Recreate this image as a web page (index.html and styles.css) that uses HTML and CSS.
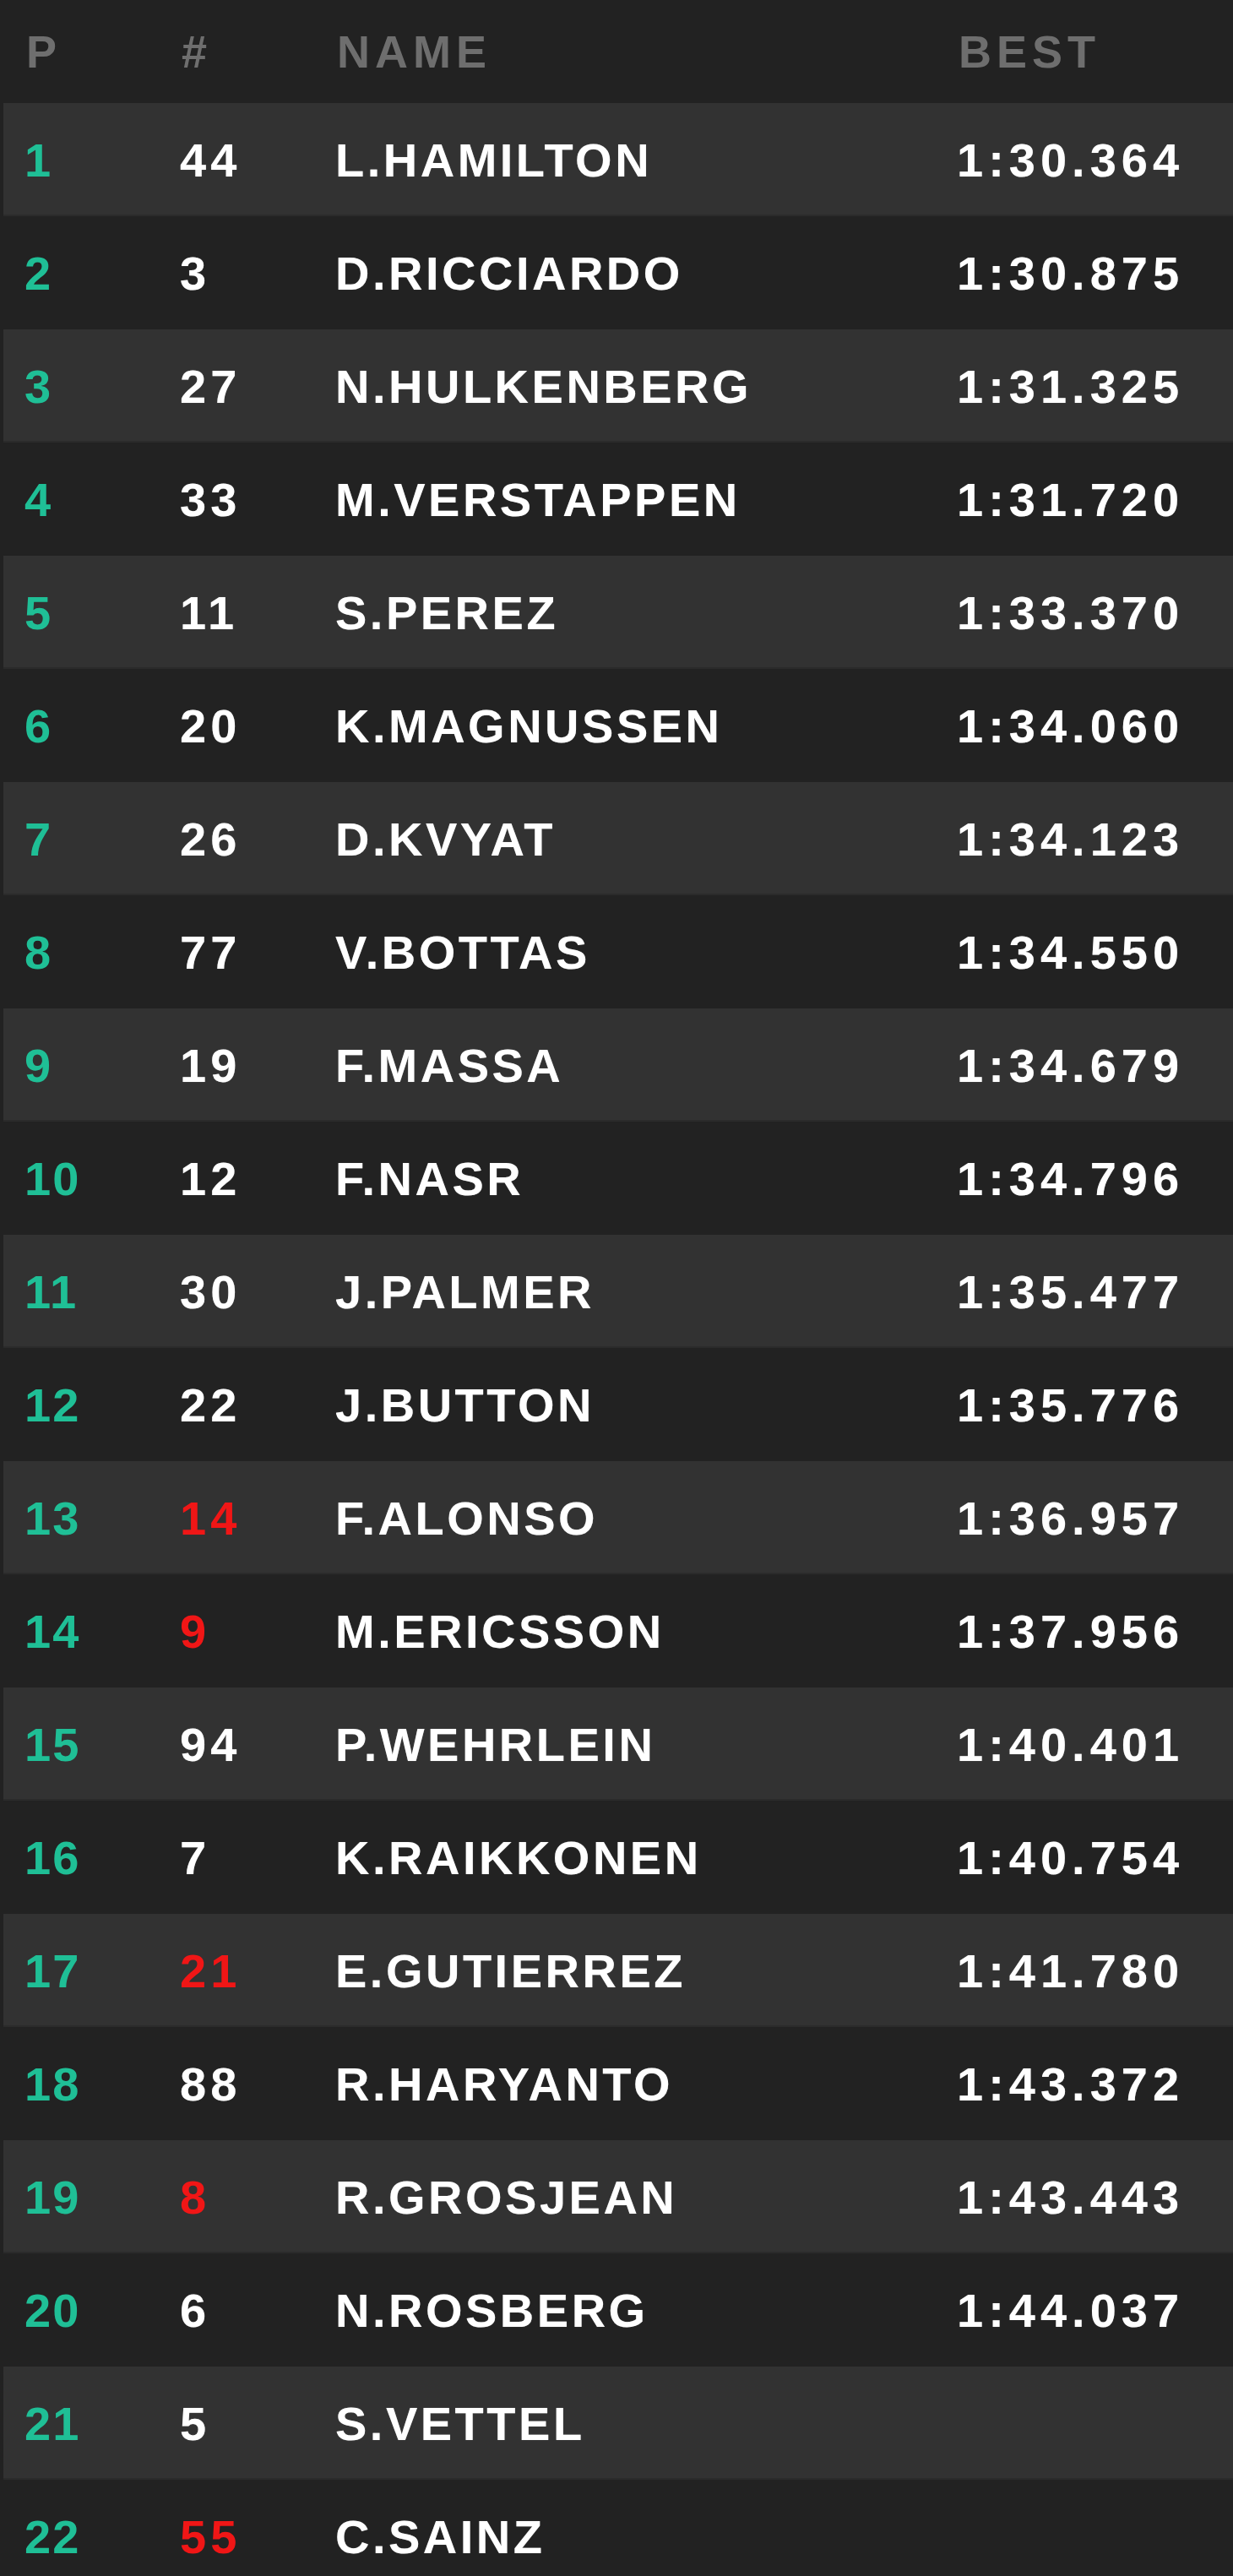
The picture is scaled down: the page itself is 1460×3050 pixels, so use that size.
FILE: index.html
```html
<!DOCTYPE html>
<html lang="en">
<head>
<meta charset="utf-8">
<title>Timing</title>
<link rel="stylesheet" href="styles.css">
</head>
<body>
<div class="board">
  <div class="head">
    <span class="c-pos">P</span>
    <span class="c-num">#</span>
    <span class="c-name">NAME</span>
    <span class="c-best">BEST</span>
  </div>
  <div class="row"><span class="c-pos">1</span><span class="c-num">44</span><span class="c-name">L.HAMILTON</span><span class="c-best">1:30.364</span></div>
  <div class="row"><span class="c-pos">2</span><span class="c-num">3</span><span class="c-name">D.RICCIARDO</span><span class="c-best">1:30.875</span></div>
  <div class="row"><span class="c-pos">3</span><span class="c-num">27</span><span class="c-name">N.HULKENBERG</span><span class="c-best">1:31.325</span></div>
  <div class="row"><span class="c-pos">4</span><span class="c-num">33</span><span class="c-name">M.VERSTAPPEN</span><span class="c-best">1:31.720</span></div>
  <div class="row"><span class="c-pos">5</span><span class="c-num">11</span><span class="c-name">S.PEREZ</span><span class="c-best">1:33.370</span></div>
  <div class="row"><span class="c-pos">6</span><span class="c-num">20</span><span class="c-name">K.MAGNUSSEN</span><span class="c-best">1:34.060</span></div>
  <div class="row"><span class="c-pos">7</span><span class="c-num">26</span><span class="c-name">D.KVYAT</span><span class="c-best">1:34.123</span></div>
  <div class="row"><span class="c-pos">8</span><span class="c-num">77</span><span class="c-name">V.BOTTAS</span><span class="c-best">1:34.550</span></div>
  <div class="row"><span class="c-pos">9</span><span class="c-num">19</span><span class="c-name">F.MASSA</span><span class="c-best">1:34.679</span></div>
  <div class="row"><span class="c-pos">10</span><span class="c-num">12</span><span class="c-name">F.NASR</span><span class="c-best">1:34.796</span></div>
  <div class="row"><span class="c-pos">11</span><span class="c-num">30</span><span class="c-name">J.PALMER</span><span class="c-best">1:35.477</span></div>
  <div class="row"><span class="c-pos">12</span><span class="c-num">22</span><span class="c-name">J.BUTTON</span><span class="c-best">1:35.776</span></div>
  <div class="row"><span class="c-pos">13</span><span class="c-num red">14</span><span class="c-name">F.ALONSO</span><span class="c-best">1:36.957</span></div>
  <div class="row"><span class="c-pos">14</span><span class="c-num red">9</span><span class="c-name">M.ERICSSON</span><span class="c-best">1:37.956</span></div>
  <div class="row"><span class="c-pos">15</span><span class="c-num">94</span><span class="c-name">P.WEHRLEIN</span><span class="c-best">1:40.401</span></div>
  <div class="row"><span class="c-pos">16</span><span class="c-num">7</span><span class="c-name">K.RAIKKONEN</span><span class="c-best">1:40.754</span></div>
  <div class="row"><span class="c-pos">17</span><span class="c-num red">21</span><span class="c-name">E.GUTIERREZ</span><span class="c-best">1:41.780</span></div>
  <div class="row"><span class="c-pos">18</span><span class="c-num">88</span><span class="c-name">R.HARYANTO</span><span class="c-best">1:43.372</span></div>
  <div class="row"><span class="c-pos">19</span><span class="c-num red">8</span><span class="c-name">R.GROSJEAN</span><span class="c-best">1:43.443</span></div>
  <div class="row"><span class="c-pos">20</span><span class="c-num">6</span><span class="c-name">N.ROSBERG</span><span class="c-best">1:44.037</span></div>
  <div class="row"><span class="c-pos">21</span><span class="c-num">5</span><span class="c-name">S.VETTEL</span><span class="c-best"></span></div>
  <div class="row"><span class="c-pos">22</span><span class="c-num red">55</span><span class="c-name">C.SAINZ</span><span class="c-best"></span></div>
</div>
</body>
</html>
```
FILE: styles.css
```css
html, body {
  margin: 0;
  padding: 0;
  background: #222222;
}

body {
  font-family: "Liberation Sans", Arial, sans-serif;
  font-weight: 700;
  color: #ffffff;
}

.board {
  display: flex;
  flex-direction: column;
  padding-left: 4px;
}

.head,
.row {
  display: grid;
  grid-template-columns: 184px 184px 736px 1fr;
  align-items: center;
  padding-left: 25px;
}

.head {
  height: 122px;
  font-size: 54px;
  letter-spacing: 6px;
  color: #6e6e6e;
}

.head span {
  padding-left: 2px;
}

.row {
  height: 134px;
  font-size: 56px;
  letter-spacing: 3.5px;
  text-shadow: 0 0 1px rgba(255, 255, 255, 0.35);
}

.row:nth-child(even) {
  background: #323232;
  box-shadow: inset 0 -2px 0 #2b2b2b;
}

.row .c-pos {
  color: #1fbf96;
  letter-spacing: 2px;
  text-shadow: none;
}

.row .c-num {
  color: #ffffff;
  letter-spacing: 5px;
}

.row .c-num.red {
  color: #f01616;
  text-shadow: none;
}

.row .c-name {
  color: #ffffff;
  white-space: nowrap;
}

.row .c-best {
  color: #ffffff;
  white-space: nowrap;
  letter-spacing: 6px;
}
```
